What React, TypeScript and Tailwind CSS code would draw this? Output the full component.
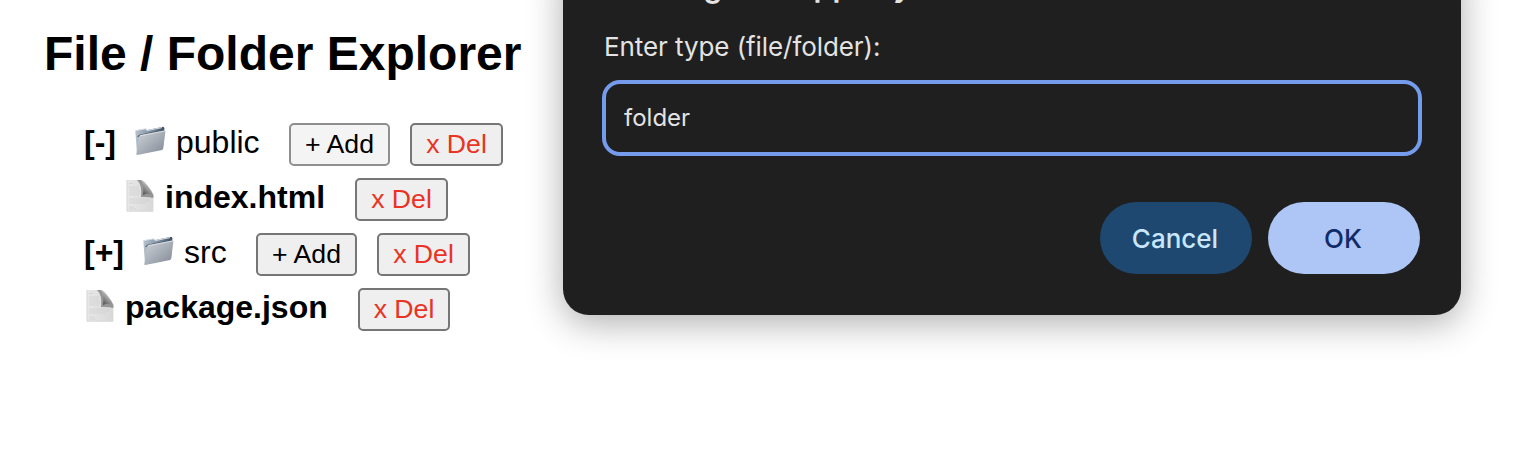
import React from "react";

function FolderIcon() {
  return (
    <svg width="32" height="32" viewBox="0 0 32 32" className="mt-px block shrink-0">
      <defs>
        <linearGradient id="folderFront" x1="0" y1="0" x2="1" y2="1">
          <stop offset="0" stopColor="#cfd3d9" />
          <stop offset="0.5" stopColor="#a9afb8" />
          <stop offset="1" stopColor="#7f8791" />
        </linearGradient>
        <linearGradient id="folderBack" x1="0" y1="0" x2="1" y2="0">
          <stop offset="0" stopColor="#b9c3ce" />
          <stop offset="0.6" stopColor="#77889a" />
          <stop offset="1" stopColor="#3c4c5e" />
        </linearGradient>
      </defs>
      <path d="M1.3 6.4 L11.5 4.7 L13 6 L29.4 2.8 L30.4 4 L29 24 L3 30 Z" fill="url(#folderBack)" />
      <path d="M1.8 6.6 L11.5 4.9 L13 6.6 L28 3.6" fill="none" stroke="#d5dce4" strokeWidth="1" />
      <path d="M3 13 L5 10.8 L30.2 5.6 L29 9 Z" fill="#4c5f73" />
      <path d="M5.2 12.2 Q5.4 11.3 6.4 11.1 L30.4 6.4 Q31.6 6.3 31.4 7.4 L29.2 24.6 Q29.1 25.6 28.1 25.9 L3.4 31 Q2.2 31.1 2.4 29.8 Z" fill="url(#folderFront)" />
      <path d="M6.2 11.8 L30.8 7" stroke="#e2e5e9" strokeWidth="0.8" />
    </svg>
  );
}

function FileIcon() {
  return (
    <svg width="28" height="33" viewBox="0 0 28 33" className="mt-px block shrink-0">
      <defs>
        <linearGradient id="foldShade" x1="0.1" y1="1" x2="0.8" y2="0.1">
          <stop offset="0" stopColor="#3f3f3f" />
          <stop offset="0.35" stopColor="#7c7c7c" />
          <stop offset="0.7" stopColor="#b8b8b8" />
          <stop offset="1" stopColor="#e6e6e6" />
        </linearGradient>
        <linearGradient id="pageShade" x1="0" y1="0" x2="1" y2="0">
          <stop offset="0" stopColor="#e8e8e8" />
          <stop offset="0.5" stopColor="#e0e0e0" />
          <stop offset="1" stopColor="#d8d8d8" />
        </linearGradient>
      </defs>
      <path d="M0.6 1 H16 Q19 2 20.5 6 L27.4 15 V32.5 H0.6 Z" fill="url(#pageShade)" />
      <path d="M3 4.5h4M3 8h10M3 10h10M3 12h11M3 14h11M3 16h10M3 20h20M3 22h21M3 24h17M3 28h5M3 30h7" stroke="#cecece" strokeWidth="0.7" />
      <path d="M11 1 H15 Q19 3 18 13 Q23 12 27.4 16 V19 Q22 17.5 15 18 Q16.5 6 11 1Z" fill="#777777" opacity="0.7" />
      <path d="M14.5 1 Q18.5 5 17 16 Q23 13.5 27.4 16.4 Q26.4 12.5 23 8.5 Q18.5 2.2 14.5 1 Z" fill="url(#foldShade)" />
      <path d="M1 1 V32.2 H27" fill="none" stroke="#cfcfcf" strokeWidth="0.6" />
    </svg>
  );
}

function AddButton({ hovered = false }: { hovered?: boolean }) {
  return (
    <button
      className={
        "h-[43px] w-[101px] shrink-0 whitespace-nowrap rounded-[5px] border-2 text-[26.67px] leading-[39px] text-black " +
        (hovered ? "border-[#8f8f8f] bg-[#f4f4f4]" : "border-[#767676] bg-[#efefef]")
      }
    >
      + Add
    </button>
  );
}

function DelButton({ narrow = false }: { narrow?: boolean }) {
  return (
    <button
      className={
        "h-[43px] shrink-0 whitespace-nowrap rounded-[5px] border-2 border-[#767676] bg-[#efefef] text-[26.67px] leading-[39px] text-[#ea3323] " +
        (narrow ? "w-[92px]" : "w-[93px]")
      }
    >
      x Del
    </button>
  );
}

export default function App() {
  return (
    <div className="relative h-[454px] w-[1536px] overflow-hidden bg-white font-['Liberation_Sans',Arial,sans-serif] text-black">
      <main className="pl-[44px] pt-[26px]">
        <h1 className="h-[97px] whitespace-nowrap text-[48px] font-bold leading-[56px]">File / Folder Explorer</h1>
        <div className="flex flex-col gap-3 pl-10 text-[32px] leading-[38px]">
          <div className="flex h-[43px]">
            <span className="w-[50px] font-bold">[-]</span>
            <FolderIcon />
            <span className="ml-[10px] w-[113px]">public</span>
            <AddButton hovered />
            <div className="w-5" />
            <DelButton />
          </div>
          <div className="flex h-[43px] pl-[42px]">
            <FileIcon />
            <span className="ml-[11px] w-[190px] font-bold">index.html</span>
            <DelButton />
          </div>
          <div className="flex h-[43px]">
            <span className="w-[58px] font-bold">[+]</span>
            <FolderIcon />
            <span className="ml-[10px] w-[72px]">src</span>
            <AddButton />
            <div className="w-5" />
            <DelButton />
          </div>
          <div className="flex h-[43px] pl-[2px]">
            <FileIcon />
            <span className="ml-[11px] w-[233px] font-bold">package.json</span>
            <DelButton narrow />
          </div>
        </div>
      </main>

      <div className="absolute left-[563px] top-[-40px] flex h-[355px] w-[898px] flex-col rounded-b-[26px] bg-[#1f1f1f] px-[39px] font-[Inter,sans-serif] text-[#e3e3e3] shadow-[0_8px_36px_rgba(0,0,0,0.32)]">
        <div className="h-[66px] whitespace-nowrap pl-[2px] pt-[8px] text-[30px] font-semibold leading-[36px] tracking-[0.3px]">
          dx5wdg.csb.app says
        </div>
        <label className="h-[54px] whitespace-nowrap pl-[2px] pt-[3px] text-[26px] leading-[36px] tracking-[-0.08px]">Enter type (file/folder):</label>
        <input
          defaultValue="folder"
          className="h-[76px] w-[820px] shrink-0 rounded-[18px] border-4 border-[#759bed] bg-transparent px-[18px] pb-[2px] text-[24px] outline-none"
        />
        <div className="mt-[46px] flex justify-end gap-4 pr-[2px] text-[26px] font-medium">
          <button className="h-[72px] w-[152px] rounded-full bg-[#1e4870] pr-[2px] text-[#c8e6fc]">Cancel</button>
          <button className="h-[72px] w-[152px] rounded-full bg-[#aec6f6] pr-[2px] text-[#112a68]">OK</button>
        </div>
      </div>
    </div>
  );
}
